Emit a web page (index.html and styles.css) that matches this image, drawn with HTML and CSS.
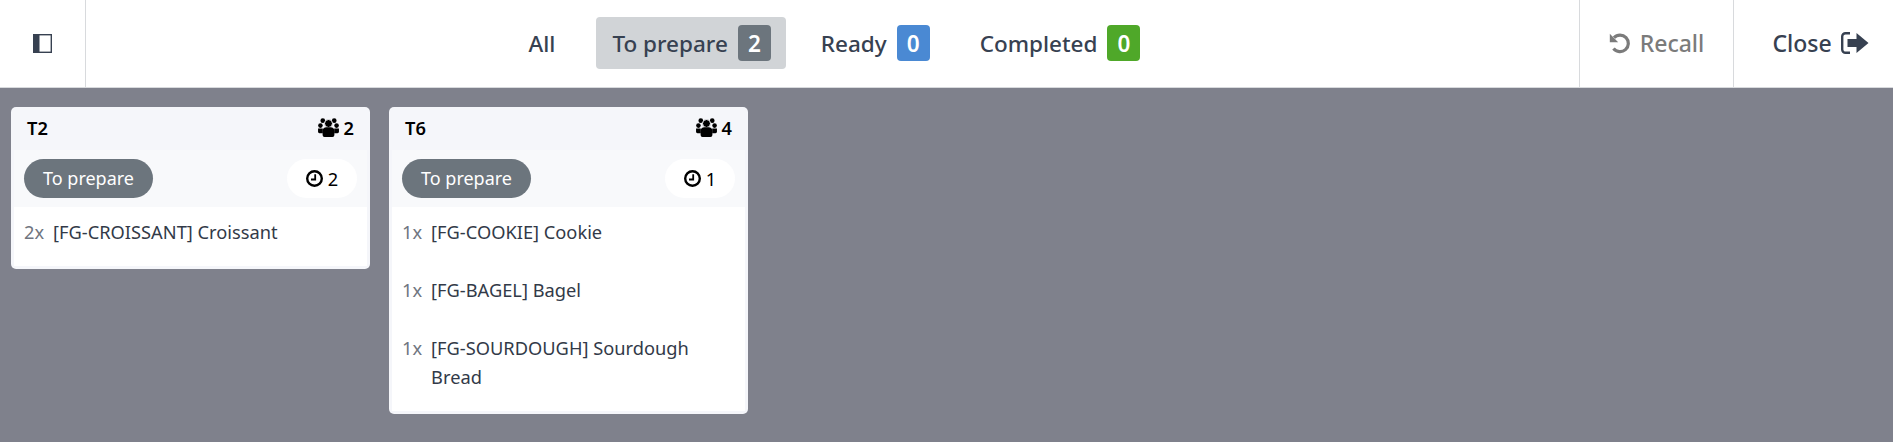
FILE: index.html
```html
<!DOCTYPE html>
<html lang="en">
<head>
    <meta charset="UTF-8">
    <meta name="viewport" content="width=device-width, initial-scale=1.0">
    <title>Preparation Display</title>
    <link rel="stylesheet" href="styles.css">
</head>
<body>
    <header class="topbar">
        <button class="cell cell-toggle" aria-label="Toggle sidebar">
            <svg width="19" height="19" viewBox="0 0 19 19">
                <rect x="0.7" y="0.7" width="17.6" height="17.6" fill="#fff" stroke="#374151" stroke-width="1.4"/>
                <rect x="0" y="0" width="6.500" height="19" fill="#374151"/>
            </svg>
        </button>
        <nav class="tabs">
            <a class="tab tab-all">All</a>
            <a class="tab active">To prepare <span class="count count-grey">2</span></a>
            <a class="tab">Ready <span class="count count-blue">0</span></a>
            <a class="tab">Completed <span class="count count-green">0</span></a>
        </nav>
        <button class="cell cell-recall">
            <svg width="22" height="22" viewBox="0 0 22 22" fill="none" stroke="#7b7b7b" stroke-width="3.200">
                <path d="M5 5.700A8.300 8.300 0 1 1 4.500 16.500"/>
                <path d="M0.800 1.800v8.400h8.400z" fill="#7b7b7b" stroke="none"/>
            </svg>
            Recall
        </button>
        <button class="cell cell-close">
            Close
            <svg width="28" height="22" viewBox="0 0 28 22">
                <path d="M9 1.200H4.500A3.300 3.300 0 0 0 1.200 4.500v13a3.300 3.300 0 0 0 3.300 3.300H9" fill="none" stroke="#374151" stroke-width="2.400"/>
                <path d="M6.500 7h9V1l12 10-12 10v-6h-9z" fill="#374151"/>
            </svg>
        </button>
    </header>

    <main class="board">
        <section class="order">
            <div class="order-head">
                <span class="table-name">T2</span>
                <span class="guests">
                    <svg width="21" height="19" viewBox="0 0 22 20"><use href="#guests"/></svg>
                    2
                </span>
            </div>
            <div class="order-status">
                <span class="pill">To prepare</span>
                <span class="timer">
                    <svg width="17" height="17" viewBox="0 0 17 17"><use href="#clock"/></svg>
                    2
                </span>
            </div>
            <ul class="lines">
                <li class="line"><span class="qty">2x</span><span>[FG-CROISSANT] Croissant</span></li>
            </ul>
        </section>

        <section class="order">
            <div class="order-head">
                <span class="table-name">T6</span>
                <span class="guests">
                    <svg width="21" height="19" viewBox="0 0 22 20"><use href="#guests"/></svg>
                    4
                </span>
            </div>
            <div class="order-status">
                <span class="pill">To prepare</span>
                <span class="timer">
                    <svg width="17" height="17" viewBox="0 0 17 17"><use href="#clock"/></svg>
                    1
                </span>
            </div>
            <ul class="lines">
                <li class="line"><span class="qty">1x</span><span>[FG-COOKIE] Cookie</span></li>
                <li class="line"><span class="qty">1x</span><span>[FG-BAGEL] Bagel</span></li>
                <li class="line"><span class="qty">1x</span><span>[FG-SOURDOUGH] Sourdough Bread</span></li>
            </ul>
        </section>
    </main>

    <svg class="defs" width="0" height="0">
        <symbol id="guests" viewBox="0 0 22 20">
            <circle cx="5" cy="2.800" r="2.500"/>
            <circle cx="17" cy="2.800" r="2.500"/>
            <circle cx="2.500" cy="8" r="2.400"/>
            <circle cx="19.500" cy="8" r="2.400"/>
            <path d="M0 11h5v5H1.500A1.500 1.500 0 0 1 0 14.500z"/>
            <path d="M22 11h-5v5h3.500a1.500 1.500 0 0 0 1.500-1.500z"/>
            <circle cx="11" cy="5.800" r="4.200" stroke="#f5f6fa" stroke-width="1"/>
            <path d="M4.800 13.500a4 4 0 0 1 4-3.800h4.400a4 4 0 0 1 4 3.800v4.500a2 2 0 0 1-2 2h-8.400a2 2 0 0 1-2-2z"/>
        </symbol>
        <symbol id="clock" viewBox="0 0 17 17">
            <circle cx="8.500" cy="8.500" r="7.300" fill="none" stroke="#000" stroke-width="2.400"/>
            <path d="M9.200 4.200v5.300H5" fill="none" stroke="#000" stroke-width="1.800"/>
        </symbol>
    </svg>
</body>
</html>
```

FILE: styles.css
```css
* {
    box-sizing: border-box;
}
html, body {
    height: 100%;
}
body {
    margin: 0;
    display: flex;
    flex-direction: column;
    font-family: "Noto Sans", sans-serif;
    font-size: 18.25px;
    color: #323a48;
    background-color: #7f818c;
}
.topbar {
    display: flex;
    align-items: stretch;
    height: 88px;
    background-color: #fff;
    border-bottom: 1px solid #d8dadd;
}
.cell {
    display: flex;
    align-items: center;
    justify-content: center;
    gap: 9px;
    padding: 0 0 1px;
    border: none;
    border-left: 1px solid #d8dadd;
    background: none;
    font: inherit;
    font-size: 23px;
    font-weight: 500;
    color: #374151;
}
.cell-toggle {
    width: 86px;
    border-left: none;
    border-right: 1px solid #d8dadd;
}
.cell-recall {
    width: 154px;
    color: #7b7b7b;
}
.cell-close {
    width: 160px;
    padding-left: 14px;
}
.tabs {
    flex: 1;
    display: flex;
    align-items: center;
    justify-content: center;
    gap: 19px;
    padding-left: 3px;
    padding-bottom: 1px;
}
.tab {
    display: flex;
    align-items: center;
    gap: 10px;
    height: 52px;
    padding: 0 15px 0 16px;
    border-radius: 4px;
    font-size: 22.5px;
    font-weight: 500;
    color: #374151;
}
.tab-all {
    margin-right: 7px;
}
.tab.active {
    background-color: #d1d4d7;
}
.count {
    display: flex;
    align-items: center;
    justify-content: center;
    width: 33px;
    height: 36px;
    border-radius: 4px;
    color: #fff;
    font-weight: 600;
}
.count-grey {
    background-color: #6c757d;
}
.count-blue {
    background-color: #4a89d3;
}
.count-green {
    background-color: #4fa829;
}
.board {
    flex: 1;
    display: flex;
    align-items: flex-start;
    gap: 19px;
    padding: 19px 11px 0;
}
.order {
    width: 359px;
    padding: 0 3px 3px;
    border-radius: 5px;
    background-color: #f5f6fa;
}
.order-head {
    display: flex;
    align-items: center;
    justify-content: space-between;
    height: 43px;
    padding: 0 13px 2px;
    font-weight: 600;
    color: #000;
}
.guests {
    display: flex;
    align-items: center;
    gap: 5px;
}
.order-status {
    display: flex;
    align-items: center;
    justify-content: space-between;
    height: 57px;
    padding: 0 10px;
    background-color: #f8f9fb;
}
.pill {
    display: flex;
    align-items: center;
    height: 39px;
    padding: 0 19px 2px;
    border-radius: 20px;
    background-color: #6c757d;
    color: #fff;
    font-size: 18px;
}
.timer {
    display: flex;
    align-items: center;
    justify-content: center;
    gap: 5px;
    width: 70px;
    height: 39px;
    padding-bottom: 1px;
    border-radius: 20px;
    background-color: #fff;
    color: #000;
}
.lines {
    margin: 0;
    padding: 10px 10px 6px;
    list-style: none;
    background-color: #fff;
}
.line {
    display: flex;
    gap: 9px;
    margin-bottom: 29px;
    line-height: 29px;
}
.line:last-child {
    margin-bottom: 14px;
}
.qty {
    color: #6f7580;
}
.defs {
    position: absolute;
    top: 0;
    left: 0;
}
```
